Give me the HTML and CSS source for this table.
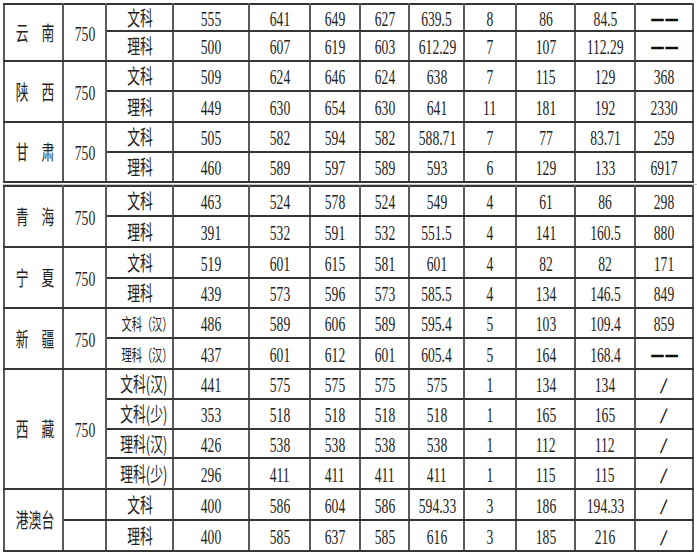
FILE: index.html
```html
<!DOCTYPE html>
<html lang="zh-CN">
<head>
<meta charset="utf-8">
<title>录取分数</title>
<link rel="stylesheet" href="styles.css">
</head>
<body>
<div class="sheet">
<table class="tbl">
<colgroup>
<col class="w59"><col class="w43"><col class="w67"><col class="w76"><col class="w61"><col class="w50"><col class="w49"><col class="w55"><col class="w52"><col class="w59"><col class="w60"><col class="w58">
</colgroup>
<tbody>
<tr class="h27"><td class="c" rowspan="2"><span class="t">云　南</span></td><td class="n" rowspan="2"><span class="t">750</span></td><td class="c"><span class="t">文科</span></td><td class="n"><span class="t">555</span></td><td class="n"><span class="t">641</span></td><td class="n"><span class="t">649</span></td><td class="n"><span class="t">627</span></td><td class="n"><span class="t">639.5</span></td><td class="n"><span class="t">8</span></td><td class="n"><span class="t">86</span></td><td class="n"><span class="t">84.5</span></td><td class="n"><span class="t dash">——</span></td></tr>
<tr class="h30"><td class="c"><span class="t">理科</span></td><td class="n"><span class="t">500</span></td><td class="n"><span class="t">607</span></td><td class="n"><span class="t">619</span></td><td class="n"><span class="t">603</span></td><td class="n"><span class="t">612.29</span></td><td class="n"><span class="t">7</span></td><td class="n"><span class="t">107</span></td><td class="n"><span class="t">112.29</span></td><td class="n"><span class="t dash">——</span></td></tr>
<tr class="h30"><td class="c" rowspan="2"><span class="t">陕　西</span></td><td class="n" rowspan="2"><span class="t">750</span></td><td class="c"><span class="t">文科</span></td><td class="n"><span class="t">509</span></td><td class="n"><span class="t">624</span></td><td class="n"><span class="t">646</span></td><td class="n"><span class="t">624</span></td><td class="n"><span class="t">638</span></td><td class="n"><span class="t">7</span></td><td class="n"><span class="t">115</span></td><td class="n"><span class="t">129</span></td><td class="n"><span class="t">368</span></td></tr>
<tr class="h31"><td class="c"><span class="t">理科</span></td><td class="n"><span class="t">449</span></td><td class="n"><span class="t">630</span></td><td class="n"><span class="t">654</span></td><td class="n"><span class="t">630</span></td><td class="n"><span class="t">641</span></td><td class="n"><span class="t">11</span></td><td class="n"><span class="t">181</span></td><td class="n"><span class="t">192</span></td><td class="n"><span class="t">2330</span></td></tr>
<tr class="h30"><td class="c" rowspan="2"><span class="t">甘　肃</span></td><td class="n" rowspan="2"><span class="t">750</span></td><td class="c"><span class="t">文科</span></td><td class="n"><span class="t">505</span></td><td class="n"><span class="t">582</span></td><td class="n"><span class="t">594</span></td><td class="n"><span class="t">582</span></td><td class="n"><span class="t">588.71</span></td><td class="n"><span class="t">7</span></td><td class="n"><span class="t">77</span></td><td class="n"><span class="t">83.71</span></td><td class="n"><span class="t">259</span></td></tr>
<tr class="h30"><td class="c"><span class="t">理科</span></td><td class="n"><span class="t">460</span></td><td class="n"><span class="t">589</span></td><td class="n"><span class="t">597</span></td><td class="n"><span class="t">589</span></td><td class="n"><span class="t">593</span></td><td class="n"><span class="t">6</span></td><td class="n"><span class="t">129</span></td><td class="n"><span class="t">133</span></td><td class="n"><span class="t">6917</span></td></tr>
</tbody>
</table>
<div class="sep"></div>
<table class="tbl last">
<colgroup>
<col class="w59"><col class="w43"><col class="w67"><col class="w76"><col class="w61"><col class="w50"><col class="w49"><col class="w55"><col class="w52"><col class="w59"><col class="w60"><col class="w58">
</colgroup>
<tbody>
<tr class="h30"><td class="c" rowspan="2"><span class="t">青　海</span></td><td class="n" rowspan="2"><span class="t">750</span></td><td class="c"><span class="t">文科</span></td><td class="n"><span class="t">463</span></td><td class="n"><span class="t">524</span></td><td class="n"><span class="t">578</span></td><td class="n"><span class="t">524</span></td><td class="n"><span class="t">549</span></td><td class="n"><span class="t">4</span></td><td class="n"><span class="t">61</span></td><td class="n"><span class="t">86</span></td><td class="n"><span class="t">298</span></td></tr>
<tr class="h31"><td class="c"><span class="t">理科</span></td><td class="n"><span class="t">391</span></td><td class="n"><span class="t">532</span></td><td class="n"><span class="t">591</span></td><td class="n"><span class="t">532</span></td><td class="n"><span class="t">551.5</span></td><td class="n"><span class="t">4</span></td><td class="n"><span class="t">141</span></td><td class="n"><span class="t">160.5</span></td><td class="n"><span class="t">880</span></td></tr>
<tr class="h31"><td class="c" rowspan="2"><span class="t">宁　夏</span></td><td class="n" rowspan="2"><span class="t">750</span></td><td class="c"><span class="t">文科</span></td><td class="n"><span class="t">519</span></td><td class="n"><span class="t">601</span></td><td class="n"><span class="t">615</span></td><td class="n"><span class="t">581</span></td><td class="n"><span class="t">601</span></td><td class="n"><span class="t">4</span></td><td class="n"><span class="t">82</span></td><td class="n"><span class="t">82</span></td><td class="n"><span class="t">171</span></td></tr>
<tr class="h30"><td class="c"><span class="t">理科</span></td><td class="n"><span class="t">439</span></td><td class="n"><span class="t">573</span></td><td class="n"><span class="t">596</span></td><td class="n"><span class="t">573</span></td><td class="n"><span class="t">585.5</span></td><td class="n"><span class="t">4</span></td><td class="n"><span class="t">134</span></td><td class="n"><span class="t">146.5</span></td><td class="n"><span class="t">849</span></td></tr>
<tr class="h30"><td class="c" rowspan="2"><span class="t">新　疆</span></td><td class="n" rowspan="2"><span class="t">750</span></td><td class="c s"><span class="t">文科（汉）</span></td><td class="n"><span class="t">486</span></td><td class="n"><span class="t">589</span></td><td class="n"><span class="t">606</span></td><td class="n"><span class="t">589</span></td><td class="n"><span class="t">595.4</span></td><td class="n"><span class="t">5</span></td><td class="n"><span class="t">103</span></td><td class="n"><span class="t">109.4</span></td><td class="n"><span class="t">859</span></td></tr>
<tr class="h31"><td class="c s"><span class="t">理科（汉）</span></td><td class="n"><span class="t">437</span></td><td class="n"><span class="t">601</span></td><td class="n"><span class="t">612</span></td><td class="n"><span class="t">601</span></td><td class="n"><span class="t">605.4</span></td><td class="n"><span class="t">5</span></td><td class="n"><span class="t">164</span></td><td class="n"><span class="t">168.4</span></td><td class="n"><span class="t dash">——</span></td></tr>
<tr class="h30"><td class="c" rowspan="4"><span class="t">西　藏</span></td><td class="n" rowspan="4"><span class="t">750</span></td><td class="c"><span class="t">文科(汉)</span></td><td class="n"><span class="t">441</span></td><td class="n"><span class="t">575</span></td><td class="n"><span class="t">575</span></td><td class="n"><span class="t">575</span></td><td class="n"><span class="t">575</span></td><td class="n"><span class="t">1</span></td><td class="n"><span class="t">134</span></td><td class="n"><span class="t">134</span></td><td class="n"><span class="t sl">/</span></td></tr>
<tr class="h30"><td class="c"><span class="t">文科(少)</span></td><td class="n"><span class="t">353</span></td><td class="n"><span class="t">518</span></td><td class="n"><span class="t">518</span></td><td class="n"><span class="t">518</span></td><td class="n"><span class="t">518</span></td><td class="n"><span class="t">1</span></td><td class="n"><span class="t">165</span></td><td class="n"><span class="t">165</span></td><td class="n"><span class="t sl">/</span></td></tr>
<tr class="h29"><td class="c"><span class="t">理科(汉)</span></td><td class="n"><span class="t">426</span></td><td class="n"><span class="t">538</span></td><td class="n"><span class="t">538</span></td><td class="n"><span class="t">538</span></td><td class="n"><span class="t">538</span></td><td class="n"><span class="t">1</span></td><td class="n"><span class="t">112</span></td><td class="n"><span class="t">112</span></td><td class="n"><span class="t sl">/</span></td></tr>
<tr class="h31"><td class="c"><span class="t">理科(少)</span></td><td class="n"><span class="t">296</span></td><td class="n"><span class="t">411</span></td><td class="n"><span class="t">411</span></td><td class="n"><span class="t">411</span></td><td class="n"><span class="t">411</span></td><td class="n"><span class="t">1</span></td><td class="n"><span class="t">115</span></td><td class="n"><span class="t">115</span></td><td class="n"><span class="t sl">/</span></td></tr>
<tr class="h31"><td class="c" rowspan="2"><span class="t">港澳台</span></td><td class="n"></td><td class="c"><span class="t">文科</span></td><td class="n"><span class="t">400</span></td><td class="n"><span class="t">586</span></td><td class="n"><span class="t">604</span></td><td class="n"><span class="t">586</span></td><td class="n"><span class="t">594.33</span></td><td class="n"><span class="t">3</span></td><td class="n"><span class="t">186</span></td><td class="n"><span class="t">194.33</span></td><td class="n"><span class="t sl">/</span></td></tr>
<tr class="h31"><td class="n"></td><td class="c"><span class="t">理科</span></td><td class="n"><span class="t">400</span></td><td class="n"><span class="t">585</span></td><td class="n"><span class="t">637</span></td><td class="n"><span class="t">585</span></td><td class="n"><span class="t">616</span></td><td class="n"><span class="t">3</span></td><td class="n"><span class="t">185</span></td><td class="n"><span class="t">216</span></td><td class="n"><span class="t sl">/</span></td></tr>
</tbody>
</table>
</div>
</body>
</html>
```
FILE: styles.css
```css
html, body {
  margin: 0;
  padding: 0;
  background: #ffffff;
}

.sheet {
  padding: 3px 0 0 3px;
}

.tbl {
  border-collapse: collapse;
  table-layout: fixed;
  width: 691px;
}

.tbl.last {
  box-shadow: 0 2px 0 #d2d2d2;
}

.tbl td {
  border-style: solid;
  border-width: 2px;
  border-top-color: #353535;
  border-bottom-color: #353535;
  border-left-color: #5a5a5a;
  border-right-color: #5a5a5a;
  padding: 0;
  text-align: center;
  vertical-align: middle;
  white-space: nowrap;
  overflow: hidden;
  line-height: 1;
  color: #222222;
}

.w59 { width: 59px; }
.w43 { width: 43px; }
.w67 { width: 67px; }
.w76 { width: 76px; }
.w61 { width: 61px; }
.w50 { width: 50px; }
.w49 { width: 49px; }
.w55 { width: 55px; }
.w52 { width: 52px; }
.w60 { width: 60px; }
.w58 { width: 58px; }

.h27 { height: 27px; }
.h29 { height: 29px; }
.h30 { height: 30px; }
.h31 { height: 31px; }

.t {
  display: inline-block;
}

.n {
  font-family: "Liberation Serif", "DejaVu Serif", serif;
  font-size: 20px;
}

.n .t {
  transform: scaleX(0.68);
  padding-top: 2px;
}

.c {
  font-family: "Noto Sans CJK SC", "Noto Sans CJK JP", sans-serif;
  font-size: 20px;
  font-weight: 400;
}

.c .t {
  transform: scaleX(0.64);
}

.c.s {
  font-size: 16px;
}

.n .dash {
  font-weight: 700;
  letter-spacing: 3px;
  padding-left: 3px;
  color: #111111;
  transform: scaleX(0.62);
  text-shadow: 0 1px 0 #111111;
  padding-top: 0;
}

.n .sl {
  font-weight: 700;
  color: #111111;
  transform: scale(1, 1.1) skewX(-8deg);
}

.sep {
  height: 1px;
  margin: 1px 0 0 0;
  background: #c4c4c4;
  width: 694px;
}
```
